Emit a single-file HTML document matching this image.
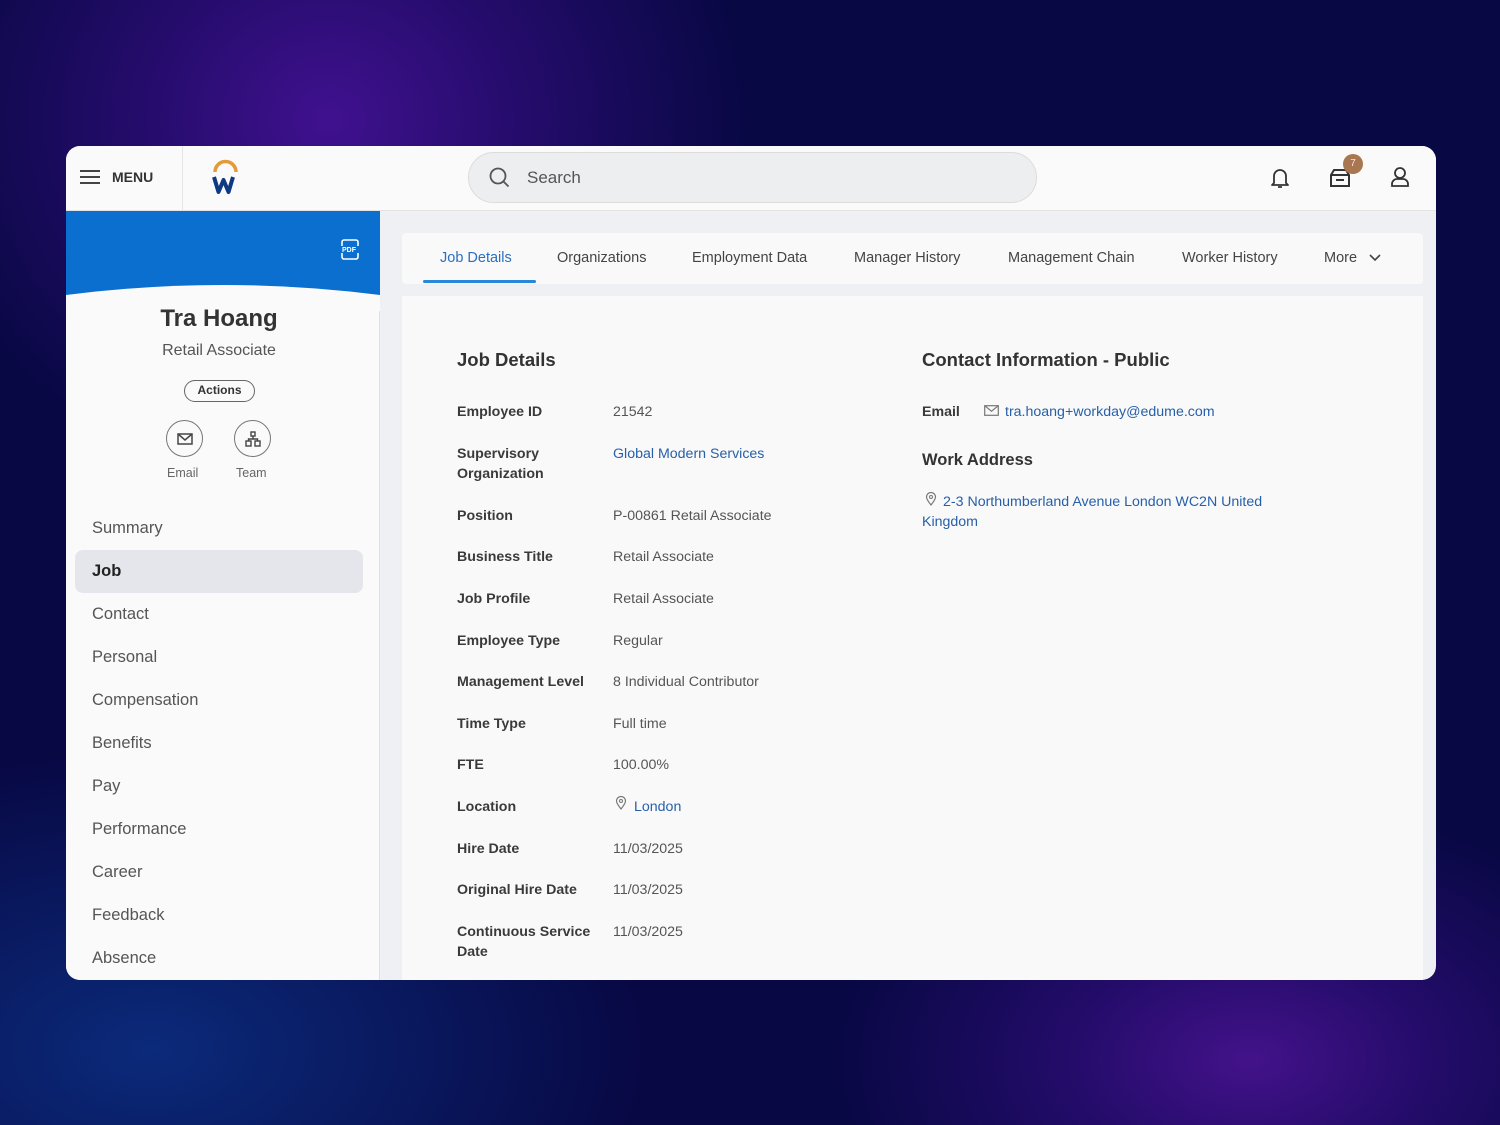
<!DOCTYPE html>
<html><head><meta charset="utf-8"><style>
*{margin:0;padding:0;box-sizing:border-box}
body{width:1500px;height:1125px;overflow:hidden;font-family:"Liberation Sans",Arial,sans-serif;color:#333;
background:radial-gradient(ellipse 420px 380px at 330px 120px,#40118f 0%,rgba(60,15,140,.55) 45%,rgba(0,0,0,0) 100%),
radial-gradient(ellipse 420px 260px at 1250px 1060px,#43128a 0%,rgba(60,15,140,.5) 45%,rgba(0,0,0,0) 100%),
radial-gradient(ellipse 500px 300px at 150px 1050px,#0b2a7a 0%,rgba(0,0,0,0) 100%),#080844;position:relative}
.card{position:absolute;left:66px;top:146px;width:1370px;height:834px;border-radius:14px;overflow:hidden;background:#eef0f3}
.top{position:absolute;left:0;top:0;width:1370px;height:65px;background:#fafafa;border-bottom:1px solid #e3e3e3}
.menu{position:absolute;left:14px;top:23px;font-size:14px;font-weight:bold;color:#333;display:flex;align-items:center;gap:12px}
.vsep{position:absolute;left:116px;top:0;width:1px;height:65px;background:#e6e6e6}
.search{position:absolute;left:402px;top:6px;width:569px;height:51px;border-radius:26px;background:#eceef0;border:1px solid #dcdcdc}
.search span{position:absolute;left:58px;top:15px;font-size:17px;color:#555}
.left{position:absolute;left:0;top:65px;width:314px;height:769px;background:#fafafa;border-right:1px solid #e0e0e0}
.blue{position:absolute;left:0;top:0;width:314px;height:84px;background:#0b6fd0}
.name{position:absolute;width:306px;text-align:center;top:94px;font-size:24px;font-weight:bold;color:#333}
.role{position:absolute;width:306px;text-align:center;top:131px;font-size:16px;color:#555}
.actions{position:absolute;left:118px;top:169px;width:71px;height:22px;border:1.5px solid #666;border-radius:12px;font-size:12px;font-weight:bold;text-align:center;line-height:19px;color:#333}
.ic{position:absolute;top:209px;width:37px;height:37px;border:1.5px solid #777;border-radius:50%;display:flex;align-items:center;justify-content:center}
.icl{position:absolute;top:255px;font-size:12.5px;color:#666}
.nav{position:absolute;left:9px;width:288px;height:43px;line-height:43px;padding-left:17px;font-size:16.5px;color:#555;border-radius:8px}
.nav.act{background:#e4e6eb;color:#222;font-weight:bold}
.tabs{position:absolute;left:336px;top:87px;width:1021px;height:51px;background:#f9f9fa;border-radius:4px}
.tab{position:absolute;top:17px;font-size:14.5px;color:#444}
.panel{position:absolute;left:336px;top:150px;width:1021px;height:700px;background:#f9f9fa}
h2{position:absolute;font-size:18.5px;font-weight:bold;color:#333}
.lb{position:absolute;left:55px;font-size:14.2px;font-weight:bold;color:#3a3a3a;line-height:20px}
.vl{position:absolute;left:211px;font-size:14.2px;color:#555}
.lk{color:#2760a8}
</style></head><body>
<div class="card">
 <div class="top">
  <div class="menu"><svg width="20" height="14"><path d="M0 1h20M0 7h20M0 13h20" stroke="#444" stroke-width="2"/></svg>MENU</div>
  <div class="vsep"></div>
  <svg style="position:absolute;left:144px;top:13px" width="32" height="38"><path d="M5 13 A10.5 10.5 0 0 1 26 13" stroke="#e39a3b" stroke-width="3.5" fill="none"/><path d="M4 18l4.5 15 5-12 5 12 4.5-15" stroke="#0e3a83" stroke-width="4" fill="none" stroke-linejoin="round"/></svg>
  <div class="search"><svg style="position:absolute;left:20px;top:14px" width="22" height="22"><circle cx="9" cy="9" r="7.5" stroke="#555" stroke-width="1.8" fill="none"/><path d="M14.5 14.5l5 5" stroke="#555" stroke-width="1.8"/></svg><span>Search</span></div>
  <svg style="position:absolute;left:1203px;top:20px" width="22" height="24"><path d="M5 17V10a6 6 0 0 1 12 0v7l2 2H3z M9 21h4" stroke="#333" stroke-width="1.8" fill="none" stroke-linejoin="round"/></svg>
  <svg style="position:absolute;left:1262px;top:21px" width="24" height="22"><path d="M3 8l3-5h12l3 5v11H3z M3 8h18 M8 13h8" stroke="#333" stroke-width="2" fill="none"/></svg>
  <div style="position:absolute;left:1277px;top:8px;width:20px;height:20px;border-radius:50%;background:#a9774f;color:#fde;font-size:10px;text-align:center;line-height:20px">7</div>
  <svg style="position:absolute;left:1324px;top:20px" width="20" height="22"><circle cx="10" cy="7" r="5" stroke="#333" stroke-width="1.8" fill="none"/><path d="M2 20v-2a5 5 0 0 1 5-5h6a5 5 0 0 1 5 5v2z" stroke="#333" stroke-width="1.8" fill="none"/></svg>
 </div>
 <div class="left">
  <div class="blue"></div>
  <svg style="position:absolute;left:0;top:70px" width="314" height="30"><path d="M0 14 Q157 -6 314 14 V30 H0z" fill="#fafafa"/></svg>
  <svg style="position:absolute;left:275px;top:28px" width="20" height="22"><rect x="1" y="1" width="16" height="19" rx="2" stroke="#fff" stroke-width="1.6" fill="none"/><rect x="0" y="7" width="18" height="7" fill="#0b6fd0"/><text x="1" y="13" font-size="7" fill="#fff" font-weight="bold" font-family="Liberation Sans">PDF</text></svg>
  <div class="name">Tra Hoang</div>
  <div class="role">Retail Associate</div>
  <div class="actions">Actions</div>
  <div class="ic" style="left:100px"><svg width="16" height="12"><rect x="1" y="1" width="14" height="10" stroke="#444" stroke-width="1.5" fill="none"/><path d="M1 1l7 6 7-6" stroke="#444" stroke-width="1.5" fill="none"/></svg></div>
  <div class="icl" style="left:101px">Email</div>
  <div class="ic" style="left:168px"><svg width="16" height="16"><rect x="6" y="1" width="4" height="4" stroke="#444" fill="none" stroke-width="1.4"/><rect x="1" y="10" width="5" height="5" stroke="#444" fill="none" stroke-width="1.4"/><rect x="10" y="10" width="5" height="5" stroke="#444" fill="none" stroke-width="1.4"/><path d="M8 5v3M3.5 10V8h9v2" stroke="#444" fill="none" stroke-width="1.4"/></svg></div>
  <div class="icl" style="left:170px">Team</div>
  <div class="nav" style="top:296px">Summary</div>
  <div class="nav act" style="top:339px">Job</div>
  <div class="nav" style="top:382px">Contact</div>
  <div class="nav" style="top:425px">Personal</div>
  <div class="nav" style="top:468px">Compensation</div>
  <div class="nav" style="top:511px">Benefits</div>
  <div class="nav" style="top:554px">Pay</div>
  <div class="nav" style="top:597px">Performance</div>
  <div class="nav" style="top:640px">Career</div>
  <div class="nav" style="top:683px">Feedback</div>
  <div class="nav" style="top:726px">Absence</div>
 </div>
 <div class="tabs">
  <div class="tab" style="left:38px;color:#2a6fc0">Job Details</div>
  <div style="position:absolute;left:21px;top:47px;width:113px;height:3px;background:#2a86d8;border-radius:2px"></div>
  <div class="tab" style="left:155px">Organizations</div>
  <div class="tab" style="left:290px">Employment Data</div>
  <div class="tab" style="left:452px">Manager History</div>
  <div class="tab" style="left:606px">Management Chain</div>
  <div class="tab" style="left:780px">Worker History</div>
  <div class="tab" style="left:922px">More <svg width="12" height="8" style="margin-left:8px"><path d="M1 1l5 5 5-5" stroke="#444" stroke-width="1.6" fill="none"/></svg></div>
 </div>
 <div class="panel">
  <h2 style="left:55px;top:53px">Job Details</h2>
  <div class="lb" style="top:106px">Employee ID</div><div class="vl" style="top:108px">21542</div>
  <div class="lb" style="top:148px">Supervisory<br>Organization</div><div class="vl lk" style="top:150px">Global Modern Services</div>
  <div class="lb" style="top:210px">Position</div><div class="vl" style="top:212px">P-00861 Retail Associate</div>
  <div class="lb" style="top:251px">Business Title</div><div class="vl" style="top:253px">Retail Associate</div>
  <div class="lb" style="top:293px">Job Profile</div><div class="vl" style="top:295px">Retail Associate</div>
  <div class="lb" style="top:335px">Employee Type</div><div class="vl" style="top:337px">Regular</div>
  <div class="lb" style="top:376px">Management Level</div><div class="vl" style="top:378px">8 Individual Contributor</div>
  <div class="lb" style="top:418px">Time Type</div><div class="vl" style="top:420px">Full time</div>
  <div class="lb" style="top:459px">FTE</div><div class="vl" style="top:461px">100.00%</div>
  <div class="lb" style="top:501px">Location</div>
  <svg style="position:absolute;left:213px;top:500px" width="12" height="14"><path d="M6 13C2 8 1.5 6.5 1.5 5a4.5 4.5 0 0 1 9 0c0 1.5-.5 3-4.5 8z" stroke="#777" stroke-width="1.2" fill="none"/><circle cx="6" cy="5" r="1.5" stroke="#777" fill="none"/></svg>
  <div class="vl lk" style="left:232px;top:503px">London</div>
  <div class="lb" style="top:543px">Hire Date</div><div class="vl" style="top:545px">11/03/2025</div>
  <div class="lb" style="top:584px">Original Hire Date</div><div class="vl" style="top:586px">11/03/2025</div>
  <div class="lb" style="top:626px">Continuous Service<br>Date</div><div class="vl" style="top:628px">11/03/2025</div>
  <h2 style="left:520px;top:53px">Contact Information - Public</h2>
  <div class="lb" style="left:520px;top:106px">Email</div>
  <svg style="position:absolute;left:582px;top:109px" width="15" height="11"><rect x=".7" y=".7" width="13.6" height="9.6" stroke="#777" stroke-width="1.2" fill="none"/><path d="M.7 .7l6.8 5.5 6.8-5.5" stroke="#777" stroke-width="1.2" fill="none"/></svg>
  <div class="vl lk" style="left:603px;top:108px">tra.hoang+workday@edume.com</div>
  <h2 style="left:520px;top:155px;font-size:16.5px">Work Address</h2>
  <svg style="position:absolute;left:523px;top:196px" width="12" height="14"><path d="M6 13C2 8 1.5 6.5 1.5 5a4.5 4.5 0 0 1 9 0c0 1.5-.5 3-4.5 8z" stroke="#777" stroke-width="1.2" fill="none"/><circle cx="6" cy="5" r="1.5" stroke="#777" fill="none"/></svg>
  <div class="vl lk" style="left:541px;top:198px">2-3 Northumberland Avenue London WC2N United</div>
  <div class="vl lk" style="left:520px;top:218px">Kingdom</div>
 </div>
</div>
</body></html>
